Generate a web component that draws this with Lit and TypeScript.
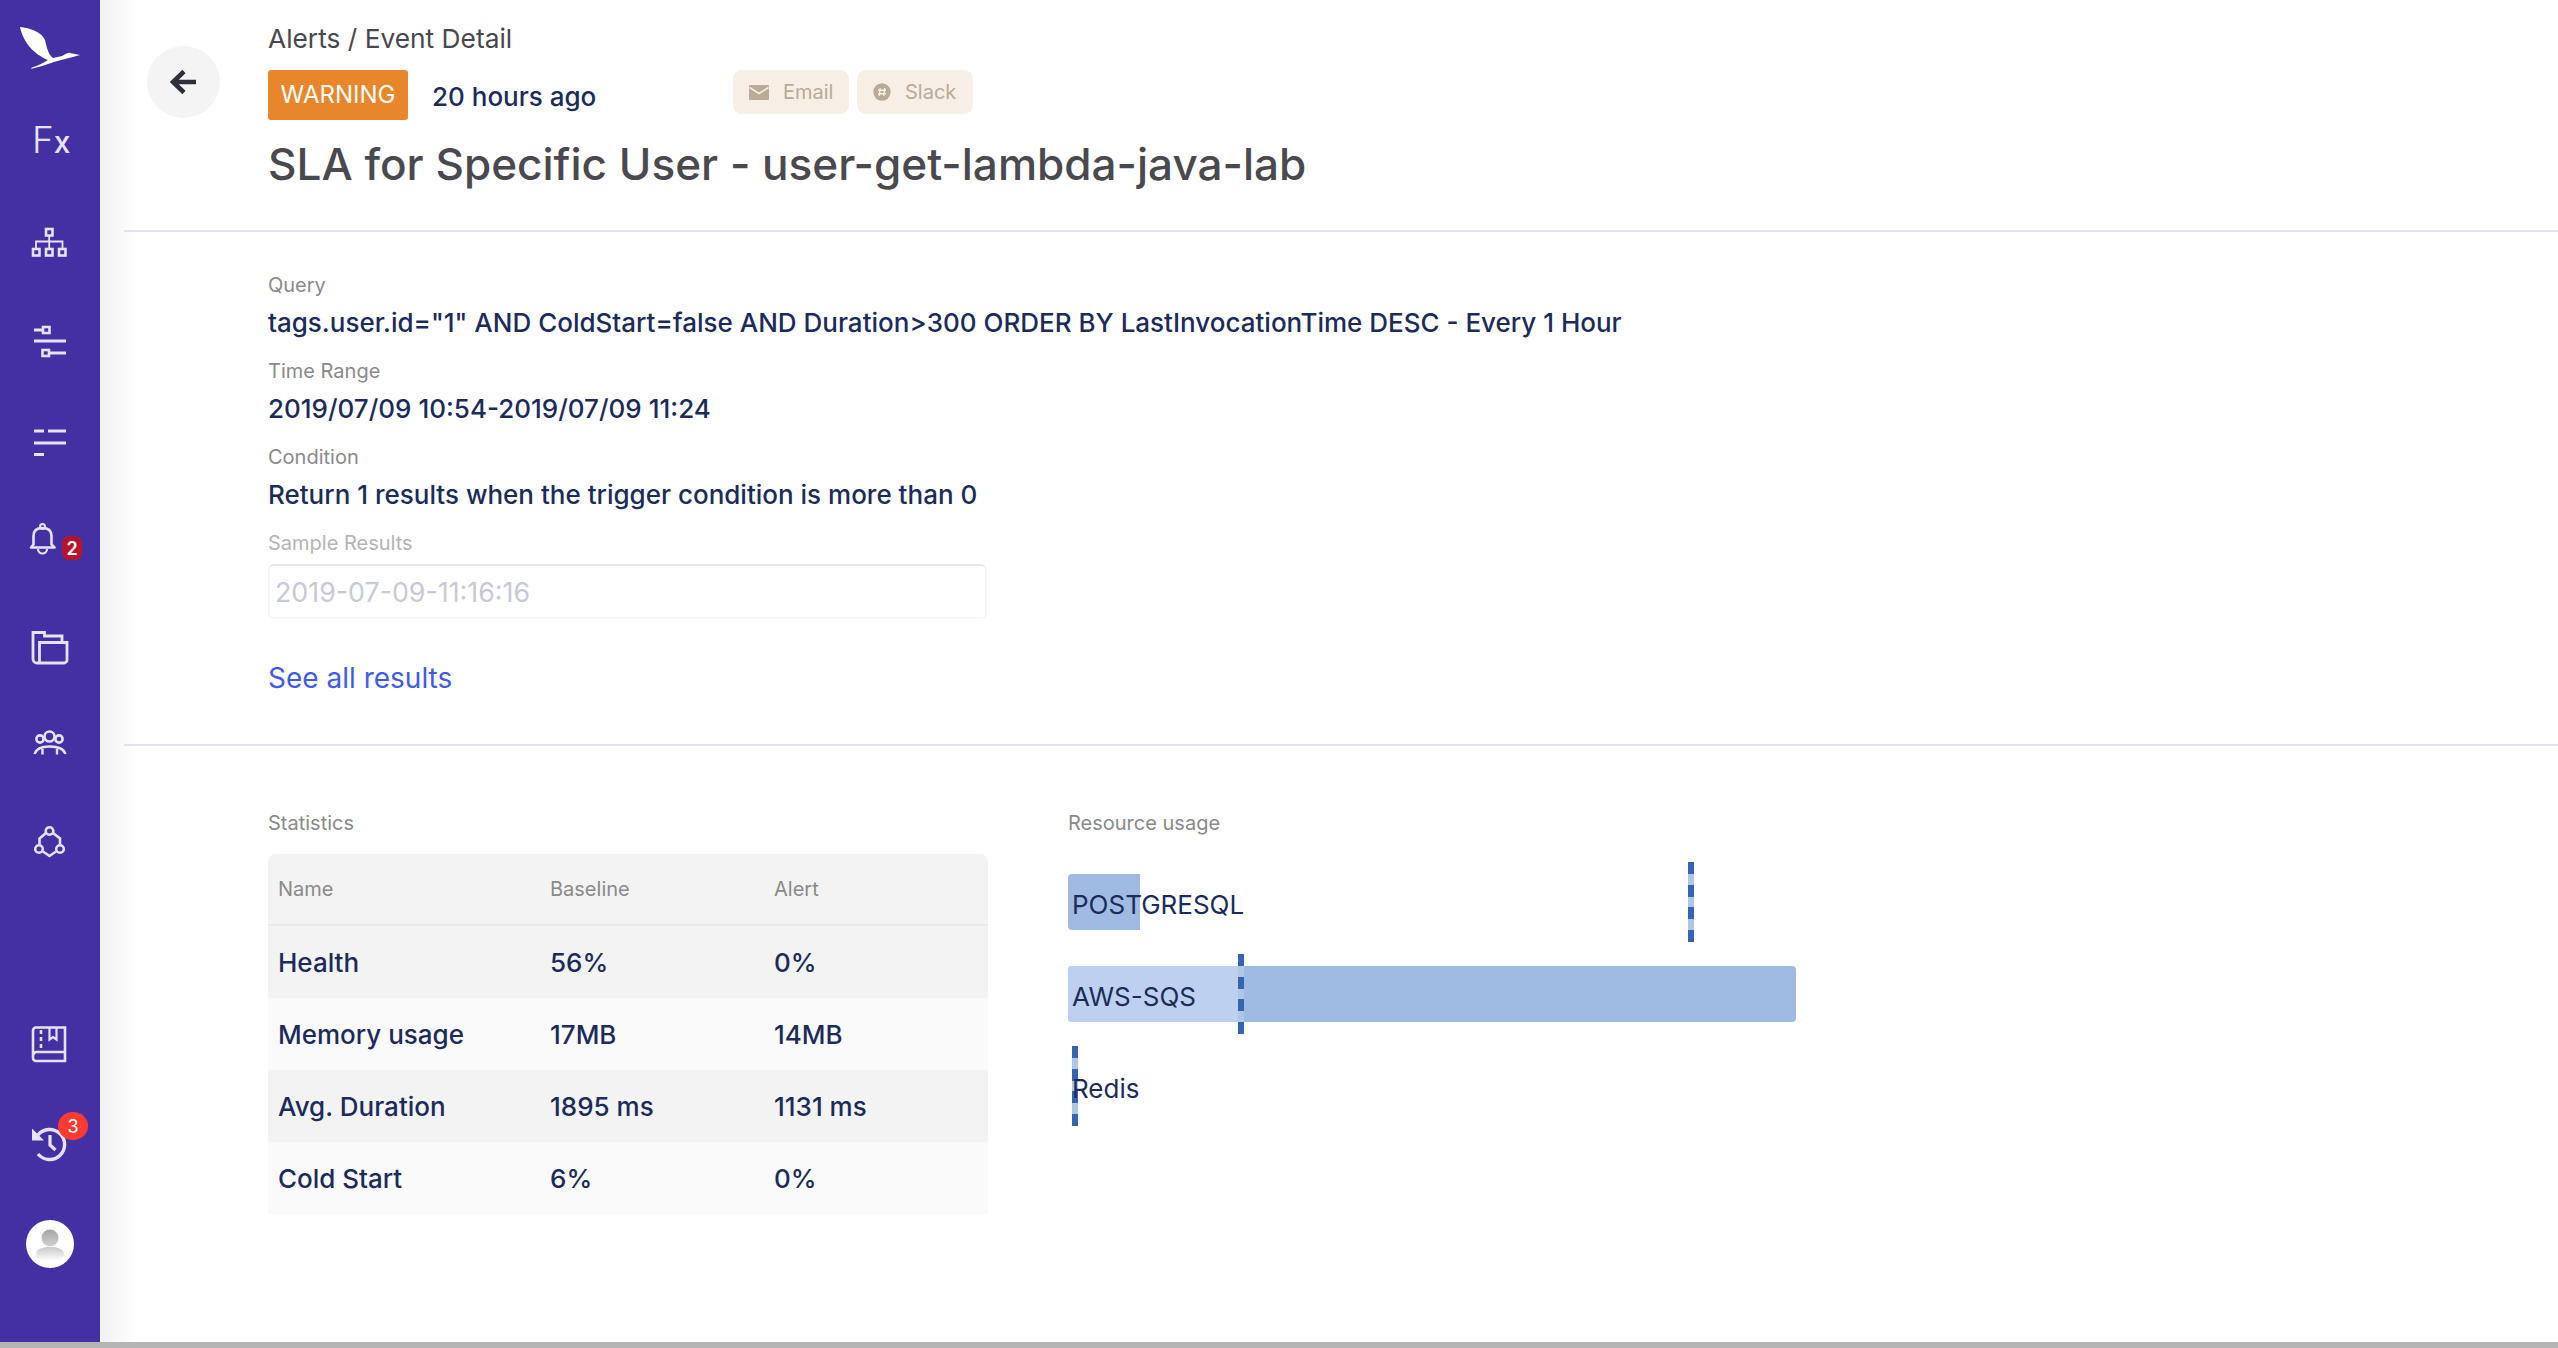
import { LitElement, html, css, svg } from "lit";
import { customElement } from "lit/decorators.js";

const navTop = [
  svg`<rect x="46" y="37" width="6.5" height="6.5" fill="none" stroke="currentColor" stroke-width="2.6"/>
    <path d="M49.2 44V56M36 56V49.5H62.5V56" fill="none" stroke="currentColor" stroke-width="1.8"/>
    <rect x="33" y="57" width="6.5" height="6.5" fill="none" stroke="currentColor" stroke-width="2.6"/>
    <rect x="46" y="57" width="6.5" height="6.5" fill="none" stroke="currentColor" stroke-width="2.6"/>
    <rect x="59" y="57" width="6.5" height="6.5" fill="none" stroke="currentColor" stroke-width="2.6"/>`,
  svg`<path d="M34 38H43M34 49H66M50 61H66" fill="none" stroke="currentColor" stroke-width="2.8"/>
    <rect x="43" y="35" width="6.5" height="6" fill="none" stroke="currentColor" stroke-width="2.6"/>
    <rect x="42.5" y="58" width="6.5" height="6" fill="none" stroke="currentColor" stroke-width="2.6"/>`,
  svg`<path d="M34 39H44M48 39H66M34 51H66M34 62.5H44" fill="none" stroke="currentColor" stroke-width="3"/>`,
  svg`<circle cx="42.5" cy="34.5" r="2.5" fill="none" stroke="currentColor" stroke-width="2"/>
    <path d="M31 55.5L33.5 52.5V44C33.5 38.5 37 36 42.5 36C48 36 51.5 38.5 51.5 44V52.5L54.5 55.5Z" fill="none" stroke="currentColor" stroke-width="2.6" stroke-linejoin="round"/>
    <path d="M38 57a4.5 4.5 0 0 0 9 0" fill="none" stroke="currentColor" stroke-width="2.2"/>`,
  svg`<path d="M39.5 71V50.5H67V68a3 3 0 0 1-3 3H37a4 4 0 0 1-4-4V40.5H44.5V44H62V50.5" fill="none" stroke="currentColor" stroke-width="2.8"/>`,
  svg`<circle cx="49.5" cy="44.5" r="5" fill="none" stroke="currentColor" stroke-width="2.6"/>
    <circle cx="40" cy="47" r="3.6" fill="none" stroke="currentColor" stroke-width="2.6"/>
    <circle cx="59" cy="47" r="3.6" fill="none" stroke="currentColor" stroke-width="2.6"/>
    <path d="M34.5 62C36 57 41 54.5 49.5 54.5C58 54.5 64 57 65.5 62M42.5 57V62.5M57 57V62.5" fill="none" stroke="currentColor" stroke-width="2.4"/>`,
  svg`<circle cx="49.5" cy="39" r="3.8" fill="none" stroke="currentColor" stroke-width="2.6"/>
    <circle cx="39" cy="57" r="3.8" fill="none" stroke="currentColor" stroke-width="2.6"/>
    <circle cx="60" cy="57" r="3.8" fill="none" stroke="currentColor" stroke-width="2.6"/>
    <path d="M46 41L39.5 46.5V53M53 41L60 46.5V53M43 59.5L49.5 64L56 59.5" fill="none" stroke="currentColor" stroke-width="2.6"/>`,
];

const navBottom = [
  svg`<path d="M65 33.5H36a3 3 0 0 0-3 3V64a3 3 0 0 0 3 3H65ZM33.5 61a3 3 0 0 1 3-3H65" fill="none" stroke="currentColor" stroke-width="2.6"/>
    <path d="M41 36V55" fill="none" stroke="currentColor" stroke-width="2.6" stroke-dasharray="4 3"/>
    <path d="M49.5 34V45.5L53 43L56.5 45.5V34" fill="none" stroke="currentColor" stroke-width="2.2"/>`,
  svg`<path d="M38 41A15 15 0 1 1 38 60" fill="none" stroke="currentColor" stroke-width="3.4"/>
    <path d="M32 34.5V46.5H44Z" fill="currentColor"/>
    <path d="M50 41V51L55.5 56" fill="none" stroke="currentColor" stroke-width="3.2"/>`,
  svg`<defs>
      <linearGradient id="head" x1="0" y1="0" x2="0" y2="1"><stop offset="0" stop-color="#a6a6a6"/><stop offset="1" stop-color="#d0d0d0"/></linearGradient>
      <linearGradient id="torso" x1="0" y1="0" x2="0" y2="1"><stop offset="0" stop-color="#c8c8c8"/><stop offset="1" stop-color="#ffffff"/></linearGradient>
    </defs>
    <circle cx="50" cy="50" r="24" fill="#fff"/>
    <circle cx="50" cy="44" r="8.5" fill="url(#head)"/>
    <path d="M36 60C36 55 42 53 50 53C58 53 64 55 64 60C64 65 60 67 50 67C40 67 36 65 36 60Z" fill="url(#torso)"/>`,
];

const stats = [
  ["Health", "56%", "0%"],
  ["Memory usage", "17MB", "14MB"],
  ["Avg. Duration", "1895 ms", "1131 ms"],
  ["Cold Start", "6%", "0%"],
];

const fields = [
  ["Query", 'tags.user.id="1" AND ColdStart=false AND Duration>300 ORDER BY LastInvocationTime DESC - Every 1 Hour'],
  ["Time Range", "2019/07/09 10:54-2019/07/09 11:24"],
  ["Condition", "Return 1 results when the trigger condition is more than 0"],
];

const resources = [
  { name: "POSTGRESQL", bar: 72, light: 0, marker: 620 },
  { name: "AWS-SQS", bar: 728, light: 170, marker: 170 },
  { name: "Redis", bar: 0, light: 0, marker: 4 },
];

@customElement("app-root")
export class AppRoot extends LitElement {
  static styles = css`
    :host {
      display: block;
      height: 1348px;
      font-family: Inter, "Liberation Sans", sans-serif;
      color: #1c2b5a;
      background: #fff;
    }
    .page {
      display: flex;
      height: 1342px;
      border-bottom: 6px solid #b5b5b5;
    }
    .side {
      flex: 0 0 100px;
      display: flex;
      flex-direction: column;
      background: #442fa3;
      color: #e6e2f5;
      padding-bottom: 48px;
    }
    .logo {
      height: 92px;
    }
    .cell {
      position: relative;
      height: 100px;
    }
    .cell svg,
    .logo svg {
      display: block;
    }
    .spacer {
      flex: 1;
    }
    .fx {
      display: flex;
      align-items: baseline;
      height: 100px;
      padding: 26px 0 0 32px;
      box-sizing: border-box;
      line-height: 44px;
    }
    .fx b {
      font-weight: 300;
      font-size: 37px;
    }
    .fx i {
      font-style: normal;
      font-weight: 500;
      font-size: 30px;
    }
    .badge {
      position: absolute;
      color: #fff;
      display: flex;
      align-items: center;
      justify-content: center;
      font-size: 18px;
    }
    .badge.square {
      left: 62px;
      top: 44px;
      width: 20px;
      height: 24px;
      border-radius: 7px;
      background: #b4142c;
      font-weight: 600;
    }
    .badge.round {
      left: 58px;
      top: 18px;
      width: 30px;
      height: 28px;
      border-radius: 50%;
      background: #ff3b30;
    }
    .main {
      flex: 1;
      padding-left: 24px;
      background: linear-gradient(90deg, #f1f1f1, #fff 36px);
      background-repeat: no-repeat;
    }
    .head {
      display: flex;
      box-sizing: border-box;
      height: 232px;
      padding: 24px 0 0 23px;
      border-bottom: 2px solid #e6e0ef;
    }
    .back {
      flex: 0 0 73px;
      height: 72px;
      margin-top: 22px;
      border-radius: 50%;
      background: #f4f4f4;
    }
    .back svg {
      display: block;
    }
    .head-text {
      margin-left: 48px;
    }
    .crumb {
      font-size: 26.3px;
      line-height: 30px;
      color: #47474d;
    }
    .meta {
      display: flex;
      align-items: flex-start;
      margin-top: 16px;
      height: 50px;
    }
    .level {
      width: 140px;
      height: 50px;
      line-height: 50px;
      text-align: center;
      font-size: 24px;
      color: #fff;
      background: #e8862c;
      border-radius: 3px;
    }
    .ago {
      width: 325px;
      padding-left: 24px;
      box-sizing: border-box;
      font-size: 26px;
      line-height: 54px;
      font-weight: 500;
    }
    .chips {
      display: flex;
      gap: 8px;
    }
    .chip {
      display: flex;
      align-items: center;
      width: 116px;
      height: 44px;
      box-sizing: border-box;
      padding-left: 16px;
      gap: 14px;
      border-radius: 9px;
      background: #f7efe6;
      color: #b9ab96;
      font-size: 20px;
    }
    .chip svg {
      display: block;
    }
    h1 {
      margin: 14px 0 0;
      font-size: 44.1px;
      line-height: 60px;
      font-weight: 500;
      color: #49494f;
      white-space: nowrap;
    }
    .detail {
      padding: 40px 0 48px 144px;
      border-bottom: 2px solid #e6e0ef;
    }
    .label {
      font-size: 20px;
      line-height: 26px;
      color: #8a8a8a;
    }
    .value {
      margin: 5px 0 15px;
      font-size: 26px;
      line-height: 40px;
      font-weight: 500;
      white-space: nowrap;
    }
    .label.faded {
      color: #b4b4b4;
    }
    .sample {
      width: 719px;
      height: 55px;
      margin-top: 8px;
      padding-left: 5px;
      box-sizing: border-box;
      border: 2px solid #f4f4f6;
      border-top-color: #e8e8ea;
      border-bottom-color: #f8f8f8;
      border-radius: 6px;
      font-size: 26.8px;
      line-height: 53px;
      color: #c6cad6;
    }
    .more {
      display: block;
      margin-top: 41px;
      font-size: 28px;
      line-height: 36px;
      color: #3f5be8;
      text-decoration: none;
    }
    .lower {
      display: flex;
      padding: 64px 0 0 144px;
    }
    .stats {
      flex: 0 0 720px;
      margin-right: 80px;
    }
    .table {
      margin-top: 18px;
      border-radius: 8px 8px 0 0;
      overflow: hidden;
      background: #fafafa;
    }
    .row {
      display: grid;
      grid-template-columns: 272px 224px 1fr;
      align-items: center;
      height: 72px;
      padding-left: 10px;
      font-size: 26px;
      font-weight: 500;
    }
    .row:nth-child(even) {
      background: #f3f3f3;
    }
    .row.title {
      height: 70px;
      border-bottom: 2px solid #e8e8e8;
      background: #f3f3f3;
      font-size: 20px;
      font-weight: 400;
      color: #8a8a8a;
    }
    .resources {
      flex: 0 0 728px;
    }
    .chart {
      display: flex;
      flex-direction: column;
      gap: 36px;
      margin-top: 38px;
    }
    .res {
      position: relative;
      height: 56px;
    }
    .bar,
    .light {
      position: absolute;
      left: 0;
      top: 0;
      height: 56px;
      border-radius: 4px 0 0 4px;
    }
    .bar {
      background: #a0bbe3;
    }
    .bar.full {
      border-radius: 4px;
    }
    .light {
      background: #bed0ef;
    }
    .marker {
      position: absolute;
      top: -12px;
      width: 6px;
      height: 80px;
      background: repeating-linear-gradient(180deg, #3565b0 0 12px, #b0c6e6 12px 22.67px);
    }
    .res-name {
      position: relative;
      padding: 3px 0 0 4px;
      font-size: 26px;
      line-height: 56px;
    }
  `;

  render() {
    return html`
      <div class="page">
        <nav class="side">
          <div class="logo">
            <svg width="100" height="92" viewBox="0 0 100 92">
              <path fill="#fff" d="M20 27C30 28 42 32 45 40C47 48 48 54 53 58L62 56C65 55 67 52 70 53L80 55C72 57 62 60 54 62C46 65 38 67 31 69L32 67.5C38 66 43 63 48 60C38 56 24 46 20 27Z"/>
            </svg>
          </div>
          <div class="fx"><b>F</b><i>x</i></div>
          ${navTop.map(
            (icon, i) => html`<div class="cell">
              <svg width="100" height="100" viewBox="0 0 100 100">${icon}</svg>
              ${i === 3 ? html`<span class="badge square">2</span>` : ""}
            </div>`
          )}
          <div class="spacer"></div>
          ${navBottom.map(
            (icon, i) => html`<div class="cell">
              <svg width="100" height="100" viewBox="0 0 100 100">${icon}</svg>
              ${i === 1 ? html`<span class="badge round">3</span>` : ""}
            </div>`
          )}
        </nav>
        <main class="main">
          <header class="head">
            <div class="back">
              <svg width="73" height="72" viewBox="0 0 73 72">
                <path d="M49 36H27M37 25.5L26 36L37 46.5" fill="none" stroke="#2d2f3a" stroke-width="4.5"/>
              </svg>
            </div>
            <div class="head-text">
              <div class="crumb">Alerts / Event Detail</div>
              <div class="meta">
                <div class="level">WARNING</div>
                <div class="ago">20 hours ago</div>
                <div class="chips">
                  <div class="chip">
                    <svg width="20" height="15" viewBox="0 0 20 15">
                      <rect width="20" height="15" rx="1" fill="#b9ab96"/>
                      <path d="M0.5 2.5L10 8.5L19.5 2.5" fill="none" stroke="#f7efe6" stroke-width="1.5"/>
                    </svg>
                    Email
                  </div>
                  <div class="chip">
                    <svg width="18" height="18" viewBox="0 0 16 16">
                      <circle cx="8" cy="8" r="7.7" fill="#b9ab96"/>
                      <path d="M6.5 4.5L5.5 11.5M10.5 4.5L9.5 11.5M4.5 6.5H11.5M4.5 9.5H11.5" stroke="#f7efe6" stroke-width="1.3"/>
                    </svg>
                    Slack
                  </div>
                </div>
              </div>
              <h1>SLA for Specific User - user-get-lambda-java-lab</h1>
            </div>
          </header>
          <section class="detail">
            ${fields.map(
              ([label, value]) => html`<div class="label">${label}</div>
                <div class="value">${value}</div>`
            )}
            <div class="label faded">Sample Results</div>
            <div class="sample">2019-07-09-11:16:16</div>
            <a class="more" href="#">See all results</a>
          </section>
          <section class="lower">
            <div class="stats">
              <div class="label">Statistics</div>
              <div class="table">
                <div class="row title"><span>Name</span><span>Baseline</span><span>Alert</span></div>
                ${stats.map(
                  (r) => html`<div class="row"><span>${r[0]}</span><span>${r[1]}</span><span>${r[2]}</span></div>`
                )}
              </div>
            </div>
            <div class="resources">
              <div class="label">Resource usage</div>
              <div class="chart">
                ${resources.map(
                  (r) => html`<div class="res">
                    ${r.bar
                      ? html`<div class="bar ${r.bar === 728 ? "full" : ""}" style="width:${r.bar}px"></div>`
                      : ""}
                    ${r.light ? html`<div class="light" style="width:${r.light}px"></div>` : ""}
                    <div class="marker" style="left:${r.marker}px"></div>
                    <div class="res-name">${r.name}</div>
                  </div>`
                )}
              </div>
            </div>
          </section>
        </main>
      </div>
    `;
  }
}
